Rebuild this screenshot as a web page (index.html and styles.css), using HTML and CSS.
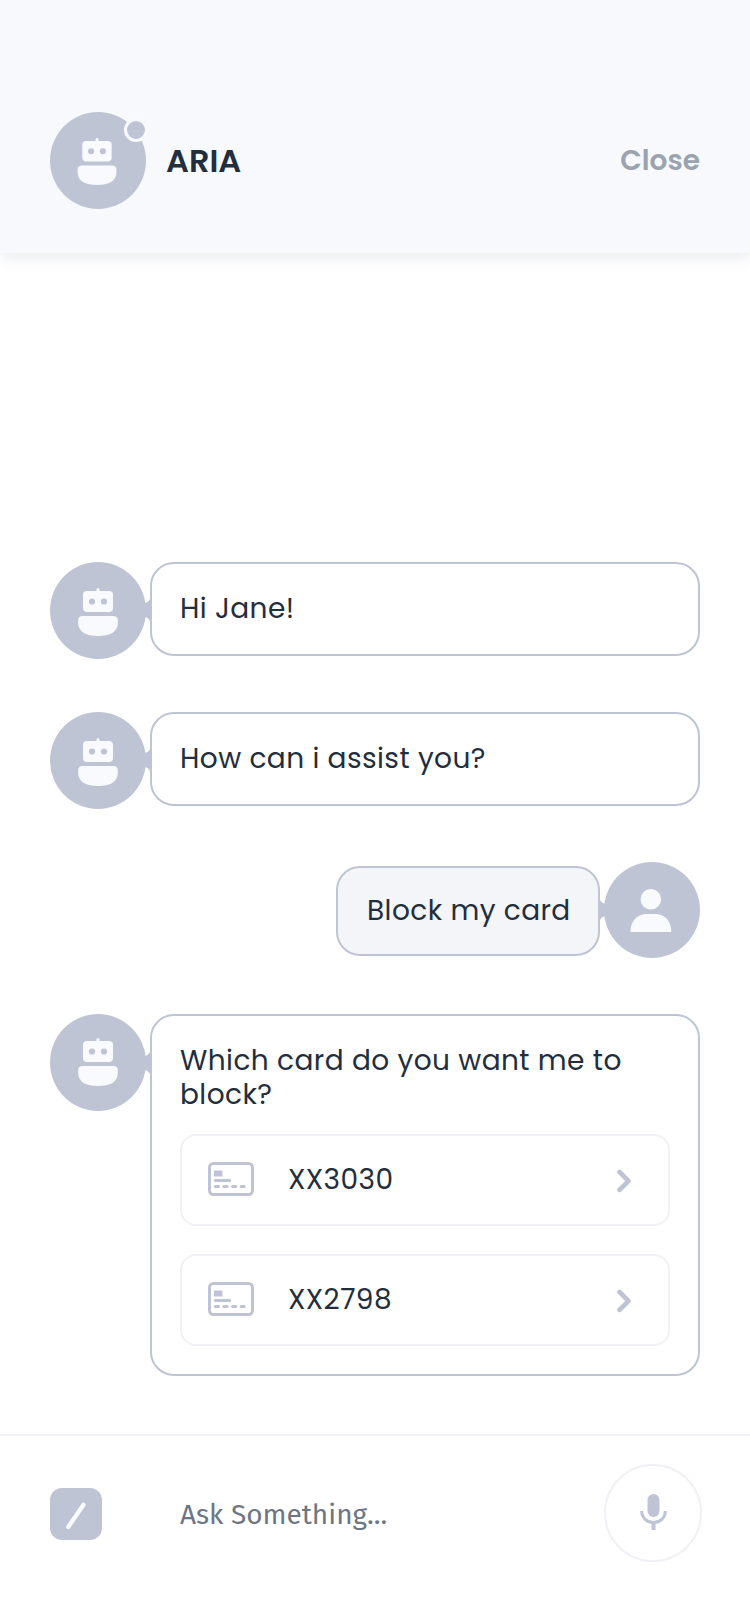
FILE: index.html
```html
<!DOCTYPE html>
<html lang="en">
<head>
<meta charset="utf-8">
<title>ARIA</title>
<link rel="stylesheet" href="styles.css">
</head>
<body>
<svg class="defs" width="0" height="0" aria-hidden="true">
  <symbol id="bot" viewBox="0 0 40 49">
    <rect x="18.5" y="0" width="3" height="5" rx="1.5" fill="#f8fafe"/>
    <rect x="5" y="3" width="30" height="21" rx="4" fill="#f8fafe"/>
    <circle cx="14" cy="13.5" r="3.1" fill="#bec4d3"/>
    <circle cx="26" cy="13.5" r="3.1" fill="#bec4d3"/>
    <path d="M5 28H35Q39.800 28 39.800 32V35C39.800 44 32 48 20 48S.2 44 .2 35V32Q.2 28 5 28Z" fill="#f8fafe"/>
  </symbol>
  <symbol id="card" viewBox="0 0 46 34">
    <rect x="1.5" y="1.5" width="43" height="31" rx="4" fill="none" stroke="#bec4d3" stroke-width="3"/>
    <path d="M6 8.5h8.500v6H6z" fill="#bec4d3"/>
    <path d="M7.300 18.500H21.700M7.300 24.500h3.200M15.800 24.500h3.200M24.500 24.500h3.200M33.200 24.500h3" fill="none" stroke="#bec4d3" stroke-width="3" stroke-linecap="round"/>
  </symbol>
  <symbol id="chevron" viewBox="0 0 14 24">
    <path d="M2.500 3L11.500 12L2.500 21" fill="none" stroke="#bec4d3" stroke-width="4.600" stroke-linecap="round" stroke-linejoin="round"/>
  </symbol>
</svg>
<header class="header">
  <div class="avatar"><svg class="bot"><use href="#bot"/></svg><span class="status"></span></div>
  <h1 class="title">ARIA</h1>
  <button class="close">Close</button>
</header>
<main class="chat">
  <div class="row">
    <div class="avatar"><svg class="bot"><use href="#bot"/></svg></div>
    <svg class="tail" viewBox="0 0 4 24"><path d="M-2 4Q2 4 4 0V22Q2 18 -2 18Z"/></svg>
    <div class="bubble"><p class="text">Hi Jane!</p></div>
  </div>
  <div class="row">
    <div class="avatar"><svg class="bot"><use href="#bot"/></svg></div>
    <svg class="tail" viewBox="0 0 4 24"><path d="M-2 4Q2 4 4 0V22Q2 18 -2 18Z"/></svg>
    <div class="bubble"><p class="text">How can i assist you?</p></div>
  </div>
  <div class="row user">
    <div class="bubble"><p class="text">Block my card</p></div>
    <svg class="tail" viewBox="0 0 4 24"><path d="M0 0Q2 3.500 6 4V16Q2 16.500 0 20Z"/></svg>
    <div class="avatar"><svg class="person" viewBox="0 0 42 44"><circle cx="20.800" cy="11.200" r="10.300"/><path d="M.5 44V42Q2 28 15 26H27Q40 28 41.200 42V44Z"/></svg></div>
  </div>
  <div class="row choice">
    <div class="avatar"><svg class="bot"><use href="#bot"/></svg></div>
    <svg class="tail" viewBox="0 0 4 24"><path d="M-2 4Q2 4 4 0V22Q2 18 -2 18Z"/></svg>
    <div class="bubble">
      <p class="text which">Which card do you want me to<br>block?</p>
      <div class="option"><svg class="card"><use href="#card"/></svg><span class="text num">XX3030</span><svg class="chevron"><use href="#chevron"/></svg></div>
      <div class="option"><svg class="card"><use href="#card"/></svg><span class="text num">XX2798</span><svg class="chevron"><use href="#chevron"/></svg></div>
    </div>
  </div>
</main>
<footer class="composer">
  <div class="slash"><svg viewBox="0 0 52 52"><path d="M18.200 39L33.500 16.800" fill="none" stroke="#f8fafe" stroke-width="4.300" stroke-linecap="round"/></svg></div>
  <span class="ask">Ask Something...</span>
  <div class="mic"><svg viewBox="0 0 27 36"><rect x="7.500" y="0" width="12" height="23" rx="6" fill="#bec4d3"/><path d="M1.700 17C1.700 24 7 28.500 13.500 28.500S25.300 24 25.300 17" fill="none" stroke="#bec4d3" stroke-width="3"/><path d="M11.500 29h4v7h-4z" fill="#bec4d3"/></svg></div>
</footer>
</body>
</html>
```
FILE: styles.css
```css
* { box-sizing: border-box; }
body {
  margin: 0;
  width: 750px;
  height: 1624px;
  display: flex;
  flex-direction: column;
  background: #fff;
  color: #232e3d;
  font-family: Poppins, Inter, sans-serif;
  overflow: hidden;
}
svg { display: block; flex: none; overflow: visible; }
.defs { position: absolute; }
.header {
  height: 253px;
  flex: none;
  display: flex;
  align-items: flex-start;
  padding: 112px 50px 0;
  background: #f7f9fd;
  box-shadow: 0 4px 16px rgba(40, 50, 90, .1);
}
.avatar {
  position: relative;
  flex: none;
  width: 96px;
  height: 97px;
  padding: 26px 0 0 28px;
  border-radius: 50%;
  background: #bec4d3;
}
.header .avatar { padding: 25.5px 0 0 27px; }
.header .bot { height: 48px; }
.bot { width: 40px; height: 49px; }
.status {
  position: absolute;
  left: 74px;
  top: 6px;
  width: 24px;
  height: 24px;
  border: 3px solid #f8fafe;
  border-radius: 50%;
  background: #bec4d3;
}
.title { margin: 29px 0 0 20px; font-size: 32px; line-height: 40px; font-weight: 600; }
.close {
  margin: 29px 0 0 auto;
  padding: 0;
  border: 0;
  background: none;
  color: #9ba4ae;
  font: 600 28px/40px Poppins, Inter, sans-serif;
}
.chat { flex: none; height: 1181px; padding: 309px 50px 0; }
.row { display: flex; align-items: flex-start; height: 97px; margin-bottom: 53px; }
.tail { width: 4px; height: 24px; margin-top: 37px; fill: #bec4d3; }
.bubble {
  flex: 1;
  height: 94px;
  padding: 25px 28px 0;
  border: 2px solid #bec4d3;
  border-radius: 24px;
}
.text { margin: 0; font-size: 28px; line-height: 40px; letter-spacing: .42px; white-space: nowrap; }
.user { justify-content: flex-end; height: 96px; margin-bottom: 56px; }
.user .bubble { flex: none; width: 264px; height: 90px; margin-top: 4px; padding: 23px 0 0 29px; background: #f3f5f9; }
.user .tail { width: 4px; margin-top: 38px; }
.user .avatar { width: 96px; height: 96px; padding: 25.5px 0 0 26px; }
.person { width: 42px; height: 44px; fill: #f8fafe; }
.choice { height: 362px; margin: 0; }
.choice .avatar { padding-top: 24px; }
.choice .tail { margin-top: 38px; }
.choice .bubble { height: 362px; padding-top: 28px; }
.choice .which { height: 90px; line-height: 34px; }
.option {
  display: flex;
  align-items: center;
  height: 92px;
  margin-bottom: 28px;
  padding: 0 37px 0 26px;
  border: 2px solid #f0f0f6;
  border-radius: 16px;
}
.card { width: 46px; height: 34px; margin-top: -2px; }
.num { margin: -1px auto 0 34px; }
.chevron { width: 14px; height: 24px; margin-top: 2px; }
.composer {
  flex: 1;
  display: flex;
  align-items: flex-start;
  padding: 28px 48px 0 50px;
  border-top: 2px solid #f0f0f6;
}
.slash { width: 52px; height: 52px; margin-top: 24px; border-radius: 12px; background: #bec4d3; }
.ask {
  margin: 31px 0 0 78px;
  font: 28px/40px "Fira Sans", "Noto Sans", sans-serif;
  color: #6d7685;
}
.mic {
  width: 98px;
  height: 98px;
  margin-left: auto;
  padding: 28px 0 0 33.500px;
  border: 2px solid #f0f0f6;
  border-radius: 50%;
}
.mic svg { width: 27px; height: 36px; }
```
